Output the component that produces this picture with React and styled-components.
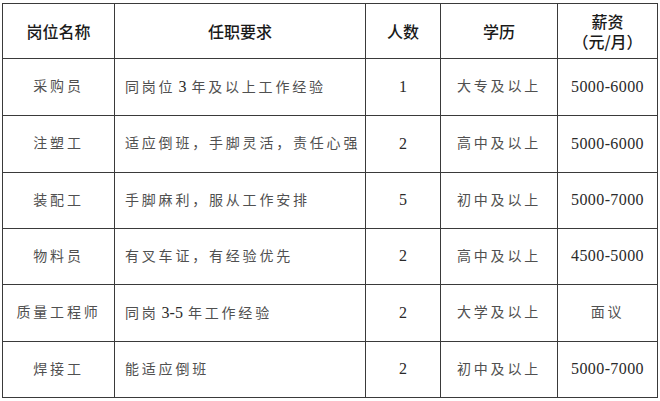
import styled, { createGlobalStyle } from 'styled-components';

const GlobalStyle = createGlobalStyle`
  html, body {
    margin: 0;
    padding: 0;
    background: #ffffff;
  }
`;

const Page = styled.div`
  padding: 3px 0 0 2px;
`;

const Table = styled.table`
  border-collapse: collapse;
  table-layout: fixed;
  width: 656px;
`;

const HeadRow = styled.tr`
  height: 55px;
`;

const Row = styled.tr`
  height: ${({ $tall }) => ($tall ? '57px' : '56px')};
`;

const HeadCell = styled.th`
  border: 1px solid #3a3a3a;
  padding: 0;
  text-align: center;
  font-family: "Noto Sans CJK SC", sans-serif;
  font-size: 16px;
  font-weight: 500;
  line-height: 20px;
  color: #1a1a1a;
`;

const Cell = styled.td`
  border: 1px solid #3a3a3a;
  padding: ${({ $left }) => ($left ? '0 0 0 10px' : '0')};
  text-align: ${({ $left }) => ($left ? 'left' : 'center')};
  font-family: "Liberation Serif", "Noto Sans CJK SC", serif;
  font-size: 14px;
  letter-spacing: 2.8px;
  line-height: 20px;
  color: #505050;
  white-space: nowrap;
`;

const Num = styled.span`
  font-family: "Liberation Serif", serif;
  font-size: 16px;
  letter-spacing: ${({ $tight }) => ($tight ? '0.4px' : '0')};
  margin: ${({ $inline }) => ($inline ? '0 5px 0 3px' : '0')};
  color: #2a2a2a;
`;

const jobs = [
  { name: '采购员', req: <>同岗位<Num $inline>3</Num>年及以上工作经验</>, count: '1', edu: '大专及以上', pay: '5000-6000' },
  { name: '注塑工', req: '适应倒班，手脚灵活，责任心强', count: '2', edu: '高中及以上', pay: '5000-6000' },
  { name: '装配工', req: '手脚麻利，服从工作安排', count: '5', edu: '初中及以上', pay: '5000-7000' },
  { name: '物料员', req: '有叉车证，有经验优先', count: '2', edu: '高中及以上', pay: '4500-5000' },
  { name: '质量工程师', req: <>同岗<Num $inline>3-5</Num>年工作经验</>, count: '2', edu: '大学及以上', pay: null },
  { name: '焊接工', req: '能适应倒班', count: '2', edu: '初中及以上', pay: '5000-7000' },
];

const tallRows = [true, true, false, false, true, false];

export default function App() {
  return (
    <Page>
      <GlobalStyle />
      <Table>
        <colgroup>
          <col style={{ width: 112 }} />
          <col style={{ width: 251 }} />
          <col style={{ width: 75 }} />
          <col style={{ width: 117 }} />
          <col style={{ width: 100 }} />
        </colgroup>
        <thead>
          <HeadRow>
            <HeadCell>岗位名称</HeadCell>
            <HeadCell>任职要求</HeadCell>
            <HeadCell>人数</HeadCell>
            <HeadCell>学历</HeadCell>
            <HeadCell>薪资<br />（元/月）</HeadCell>
          </HeadRow>
        </thead>
        <tbody>
          {jobs.map((job, i) => (
            <Row key={job.name} $tall={tallRows[i]}>
              <Cell>{job.name}</Cell>
              <Cell $left>{job.req}</Cell>
              <Cell><Num>{job.count}</Num></Cell>
              <Cell>{job.edu}</Cell>
              <Cell>{job.pay ? <Num $tight>{job.pay}</Num> : '面议'}</Cell>
            </Row>
          ))}
        </tbody>
      </Table>
    </Page>
  );
}
